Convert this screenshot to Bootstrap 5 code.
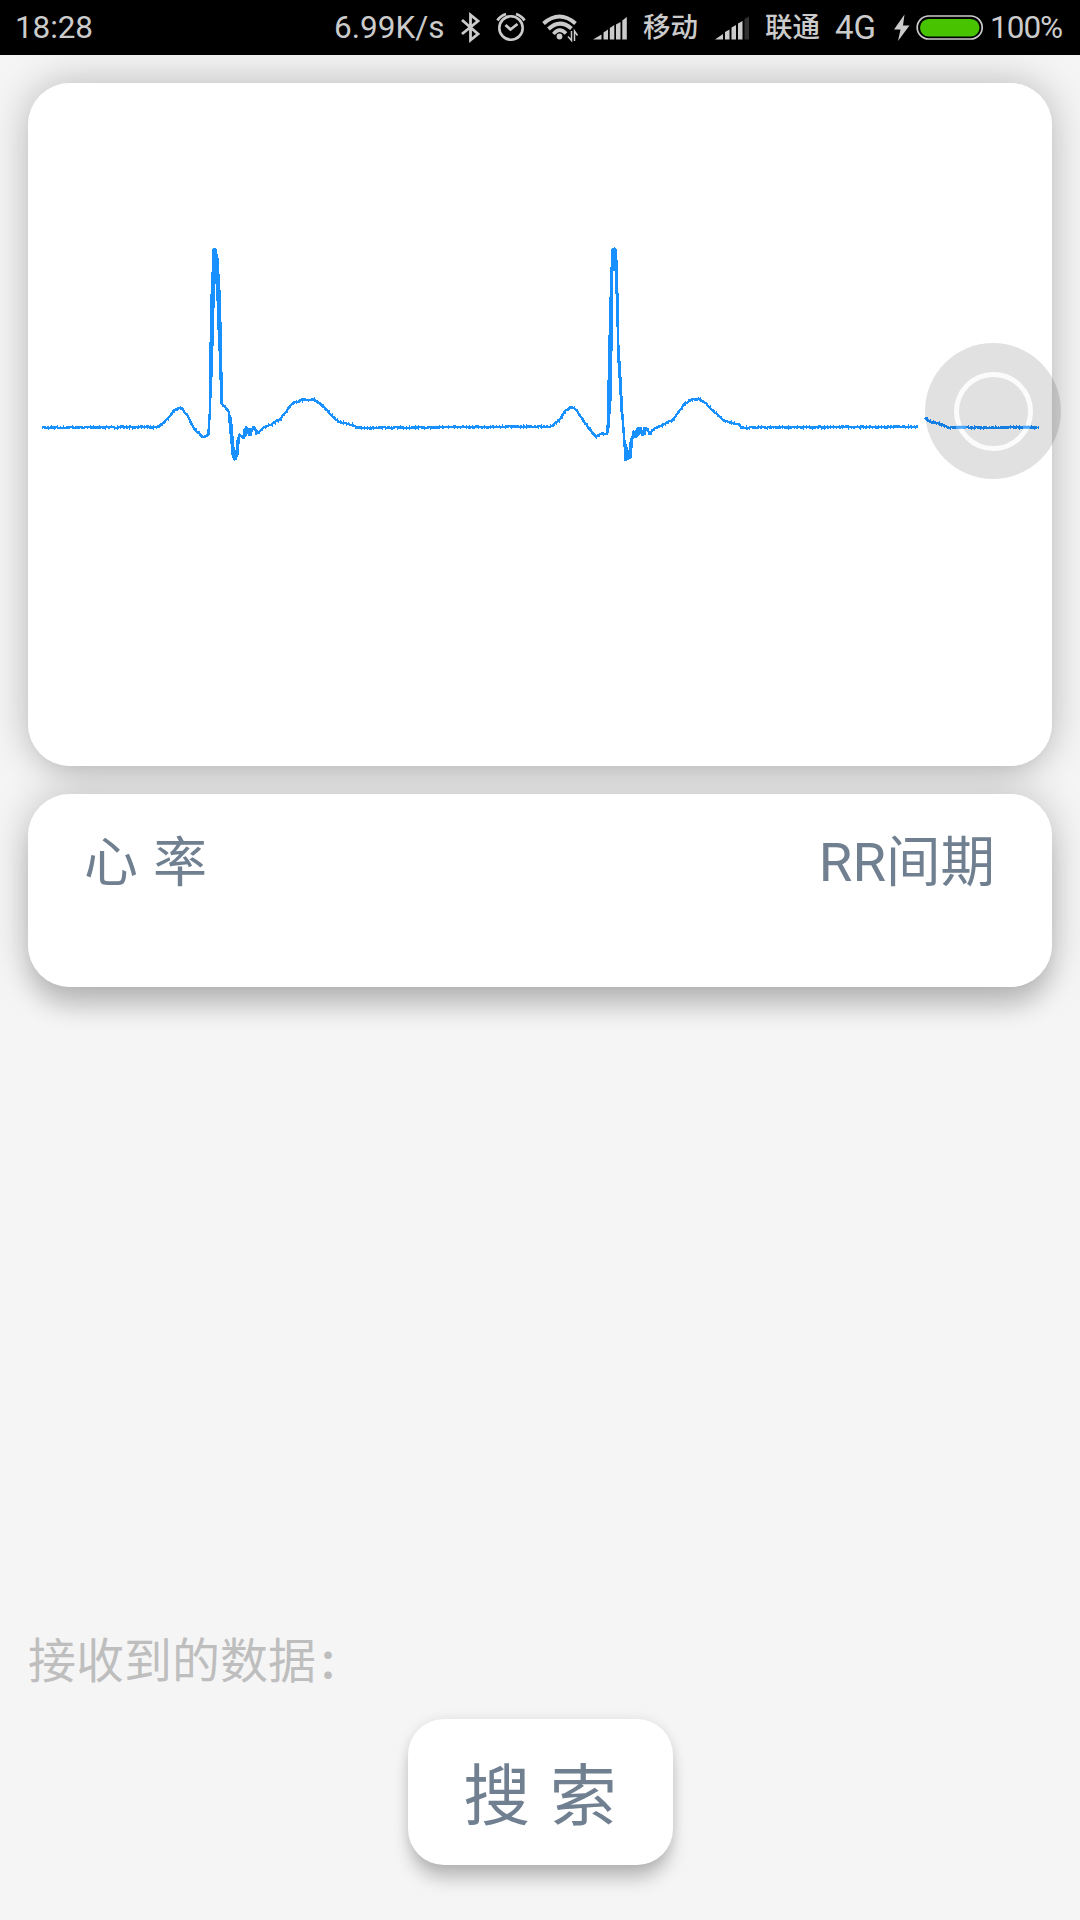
<!DOCTYPE html>
<html lang="zh-CN">
<head>
<meta charset="utf-8">
<meta name="viewport" content="width=device-width, initial-scale=1">
<title>心率</title>
<link href="https://cdn.jsdelivr.net/npm/bootstrap@5.3.0/dist/css/bootstrap.min.css" rel="stylesheet">
<style>
  body { background: #f5f5f5; font-family: "Noto Sans", "Noto Sans CJK SC", sans-serif; }
  .screen { height: 1920px; isolation: isolate; }
  .status { height: 55px; background: #000; color: #cbcbcb; font: 31.5px/57px Roboto, "Noto Sans CJK SC", sans-serif; white-space: nowrap; padding-left: 15px; }
  .status svg { flex: none; display: block; fill: #cbcbcb; }
  .status .cjk { font-size: 27.5px; line-height: 59px; font-weight: 500; }
  .w-time { width: 319px; } .w-speed { width: 123px; } .w-carrier { width: 70px; } .w-net { width: 58px; }
  .w-time { letter-spacing: -.1px; }
  .w-speed { font-size: 31.5px; }
  .w-net { font-size: 33px; }
  .w-level { letter-spacing: -1px; margin-left: -1px; }
  .panel { background: #fff; border: 0; border-radius: 42px; margin: 28px 28px 0; }
  .panel::before { content: ""; position: absolute; inset: 0; z-index: -1; border-radius: inherit;
    box-shadow: 0 0 40px rgba(0,0,0,.22), 0 23px 26px -4px rgba(0,0,0,.17); }
  .ecg::before { box-shadow: 0 0 40px rgba(0,0,0,.25), 0 14px 26px -12px rgba(0,0,0,.1); }
  .ecg svg { display: block; }
  .ecg { height: 683px; }
  .rates { height: 193px; padding: 27px 57px 0 56px; color: #708090; font-size: 54px; line-height: 80px; }
  .rates span:first-child { word-spacing: 1px; }
  .rates .interval { font-family: Roboto, "Noto Sans CJK SC", sans-serif; font-size: 54.5px; line-height: 82px; }
  .received { margin: 0 0 26px 28px; color: #bebebe; font-size: 48px; line-height: 72px; font-family: "Noto Sans CJK SC", sans-serif; }
  .received b { font-weight: 700; font-size: 40px; line-height: 1; margin-left: 2px; }
  .search { width: 265px; height: 146px; border-radius: 36px; background: #fff; border: 0; color: #708090; font-size: 67px; line-height: 100px; margin-bottom: 55px; padding: 4px 0 0; word-spacing: 2px;
    box-shadow: 0 0 12px rgba(0,0,0,.09), 0 16px 18px -3px rgba(0,0,0,.24); }
  .search:hover { background: #fff; color: #708090; }
  .assist { position: absolute; left: 925px; top: 343px; z-index: 3; width: 136px; height: 136px; border-radius: 50%; background: rgba(0,0,0,.118); }
  .assist span { width: 79px; height: 79px; border: 5px solid rgba(255,255,255,.87); border-radius: 50%; }
  .through { mix-blend-mode: multiply; }
</style>
<script src="https://cdn.jsdelivr.net/npm/bootstrap@5.3.0/dist/js/bootstrap.bundle.min.js"></script>
</head>
<body>
<main class="screen position-relative d-flex flex-column overflow-hidden">
  <header class="status d-flex align-items-center">
    <span class="w-time">18:28</span>
    <span class="w-speed">6.99K/s</span>
    <svg width="186" height="55" viewBox="457 0 186 55" aria-hidden="true">
      <path d="M462 20 478 34 470.500 40V15L478 21 462 34" fill="none" stroke="#cbcbcb" stroke-width="2.800"/>
      <g fill="none" stroke="#cbcbcb">
        <circle cx="511" cy="28" r="11.700" stroke-width="2.600"/>
        <path d="M505.500 25 510.500 29.500 517.500 24" stroke-width="2.800"/>
        <path d="M497.500 20.500Q500 16 506 14M516 14Q522 16 524.500 20.500" stroke-width="2.800"/>
        <path d="M543.500 23.500Q559.500 9.500 575.500 23.500" stroke-width="4"/>
        <path d="M548.500 29Q559.500 18.500 571.500 28.500" stroke-width="4"/>
        <path d="M553.500 34Q559.500 26.500 566 33.500" stroke-width="3.600"/>
        <path d="M571.500 31V40.500L568 36.500M574.500 41V31L577.500 35.500" stroke-width="1.500"/>
      </g>
      <circle cx="559.500" cy="36.500" r="2.900"/>
      <path d="M593 39.500 601.500 34.500V39.500ZM603.500 32.500 608 29.500V39.500H603.500ZM609.800 28 614.300 25V39.500H609.800ZM616 24.500 620.500 22V39.500H616ZM622.300 20.500 626.800 17V39.500H622.300Z"/>
    </svg>
    <span class="cjk w-carrier">移动</span>
    <svg width="52" height="55" viewBox="713 0 52 55" aria-hidden="true">
      <path d="M715 39.500 723 34V39.500ZM725 32 729.500 29.500V39.500H725ZM731.500 27.500 736 25V39.500H731.500ZM738 23.500 742.500 21V39.500H738Z"/>
      <path d="M744.500 19 749 16.500V39.500H744.500Z" fill="#303030"/>
    </svg>
    <span class="cjk w-carrier">联通</span>
    <span class="w-net">4G</span>
    <svg width="98" height="55" viewBox="893 0 98 55" aria-hidden="true">
      <path d="M904.500 14.500 894 29.500H900.500L898 41 909.500 25.500H903Z"/>
      <rect x="917.200" y="16" width="65" height="23" rx="11.500" fill="none" stroke="#cbcbcb" stroke-width="1.700"/>
      <rect x="920" y="19" width="59.500" height="17.500" rx="8.700" fill="#48c300"/>
    </svg>
    <span class="w-level">100%</span>
  </header>

  <section class="card panel ecg">
    <svg width="1024" height="683" viewBox="28 83 1024 683" fill="none" stroke="#1890ff" stroke-width="2.400" stroke-linejoin="bevel" shape-rendering="crispEdges" role="img" aria-label="心电图"><g id="trace"></g></svg>
  </section>

  <section class="card panel rates d-flex flex-row justify-content-between align-items-start">
    <span>心 率</span>
    <span class="interval">RR间期</span>
  </section>

  <div class="received mt-auto">接收到的数据<b>：</b></div>
  <button type="button" class="btn search align-self-center">搜 索</button>
  <div class="assist d-flex align-items-center justify-content-center"><span></span>
    <svg class="position-absolute top-0 start-0" width="136" height="136" viewBox="925 343 136 136" aria-hidden="true"><path d="M956 427.300H966M1023 427.300H1030" stroke="#4da6fa" stroke-width="3"/></svg>
  </div>
</main>
<script>
  // ECG samples [x, y], one list per continuous sweep
  const sweeps = [
    [[42,427.5],[157,427],[165,421.7],[175,409.3],[181.7,408],[188.3,417.3],[193.3,427.3],[203.3,437.7],[208.3,434.3],
     [209.7,415],[211,380],[212,320],[213.5,270],[214.7,248],[216.5,257],[218,297],[220,360],[221.5,403],[229,412],[231,437],[233.5,458],[235.5,458],
     [239,435],[244,438],[246,427],[250,435],[253.5,427],[257,433],[263.5,427.5],[271.5,424],[280.5,419],[291.5,404],[300,400.3],
     [313.5,399.3],[321.5,404.5],[331.5,415.5],[338.5,421.7],[351.5,424.7],[356.5,428],[450,427.2],[551.7,426.5],[560,419],[566,410],[572,407],[577,411],[585,423],
     [596,437.3],[601,434],[607.3,433.3],[609,400],[610,346],[611.5,270],[613,249],[615.5,249],[617,297],[618.5,360],[621.5,403],[624,437],[625.5,458],
     [628.5,458],[631,440],[633.5,434],[636.5,437],[639.5,427.5],[642.5,435],[646,427],[649.5,434],[653.5,429],[663.5,425],[673.5,419],
     [685,403.5],[691.5,400],[700,399],[706.5,404],[723.5,420.5],[738.5,424.5],[741.5,427.7],[800,427.3],[918,426.8]],
    [[925,417.7],[928.5,421],[940,424],[948.5,427.5],[1037.5,427.2]]
  ];
  const bands = [
    'M209 415 210.5 306 212 272 213 249 216 249 218 258 220 290 221.5 337 222.5 403 220.5 383 218 330 216 272 214.5 290 213 347 211.5 393Z',
    'M228 412 231.5 418 234 447 235.5 455 237 440 240 433 238 455 234.5 461 232 455Z',
    'M243 430 247 427 247 434 244 439ZM248 428 251 428 252 435 249 436ZM255 427 258 432 256 435Z',
    'M607 432 608.5 354 610.5 278 612 249 616 249 617.5 265 619 345 621.5 385 624 435 620.5 408 617.500 330 615 270 613 270 611.5 395 609 428Z',
    'M623.5 435 627 447 628 455 631 440 634 430 631 458 625 461Z',
    'M632 431 635 432 637 428 641 427 641 433 636 437 632 439ZM644 427 647 427 645 435 642 434Z'
  ];
  // Short vertical whiskers give the baseline its measurement noise
  let d = '', whiskers = '', n = 0, seed = 7;
  const rnd = () => (seed = seed * 16807 % 2147483647) / 2147483647;
  for (const pts of sweeps) {
    d += 'M' + pts[0];
    for (let i = 1; i < pts.length; i++) {
      const [x0, y0] = pts[i - 1], [x1, y1] = pts[i];
      const steps = Math.max(1, Math.round((x1 - x0) / 1.5));
      for (let k = 1; k <= steps; k++) {
        const t = k / steps, x = x0 + (x1 - x0) * t, y = y0 + (y1 - y0) * t, flat = Math.abs(y1 - y0) < 20;
        const j = flat ? (rnd() - .5) * 1.4 : 0;
        d += 'L' + x.toFixed(1) + ' ' + (y + j).toFixed(1);
        if (flat && n++ % 2) whiskers += 'M' + Math.round(x) + '.5 ' + (y - 1 - rnd() * 1.5).toFixed(1) + 'V' + (y + 1 + rnd() * 1.5).toFixed(1);
      }
    }
  }
  document.getElementById('trace').innerHTML = '<path d="' + d + '"/><path stroke-width="1" d="' + whiskers + '"/><path fill="#1890ff" stroke-width="1" d="' + bands.join('') + '"/>';
</script>
</body>
</html>
